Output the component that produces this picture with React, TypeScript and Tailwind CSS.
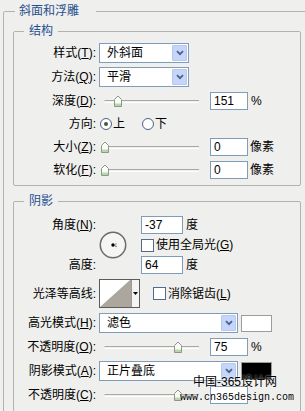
import type { ReactNode } from "react";

/* ── small pieces ── */
const Key = ({ k }: { k: string }) => <span className="underline underline-offset-[1px]">{k}</span>;

function Label({ children }: { children: ReactNode }) {
  return <div className="w-[83px] shrink-0 whitespace-nowrap pr-[1px] text-right">{children}</div>;
}

function Select({ value, wide }: { value: string; wide?: boolean }) {
  return (
    <div
      className={`ml-[2px] flex h-[20px] shrink-0 items-center border border-[#7f9db9] bg-white p-[1px] ${
        wide ? "w-[139px]" : "w-[90px]"
      }`}
    >
      <span className="flex-1 pl-[6px]">{value}</span>
      <div className="flex h-full w-[15px] items-center justify-center rounded-[1px] border border-[#b4c8f2] bg-[#c6d6fb]">
        <svg width="8" height="6" viewBox="0 0 8 6">
          <path d="M1 1.2 L4 4.2 L7 1.2" fill="none" stroke="#4d6185" strokeWidth="1.8" />
        </svg>
      </div>
    </div>
  );
}

function Slider({ at }: { at: number }) {
  return (
    <div className="relative ml-[2px] h-[18px] w-[104px] shrink-0">
      <div className="absolute left-[5px] right-[4px] top-[8px] h-[3px] rounded-l-full border-t border-b border-t-[#a9a9a4] border-b-white" />
      <svg className="absolute top-[3px]" style={{ left: at }} width="10" height="12" viewBox="0 0 10 12">
        <path d="M1.5 11.5 V4.5 L5 1 L8.5 4.5 V11.5 Z" fill="#fbfbf8" stroke="#8b978a" />
        <rect x="2" y="8.5" width="6" height="2.5" fill="#b5d9a6" />
      </svg>
    </div>
  );
}

function Num({ v, wide }: { v: string; wide?: boolean }) {
  return (
    <div
      className={`flex h-[18px] shrink-0 items-center border border-[#7f9db9] bg-white pl-[3px] ${
        wide ? "w-[42px]" : "w-[38px]"
      }`}
    >
      {v}
    </div>
  );
}

const Check = () => <div className="h-[13px] w-[13px] shrink-0 border border-[#506b8c] bg-white" />;

function Radio({ on }: { on?: boolean }) {
  return (
    <div className="flex h-[12px] w-[12px] shrink-0 items-center justify-center rounded-full border border-[#4d6280] bg-white">
      {on && <div className="h-[4px] w-[4px] rounded-full bg-[#3f5a3f]" />}
    </div>
  );
}

function Group({ title, className, children }: { title: string; className: string; children: ReactNode }) {
  return (
    <fieldset className={`w-[288px] rounded-[2px] border border-[#b3b3ad] ${className}`}>
      <legend className="ml-[10px] px-[5px] text-[#1f4f8f]">{title}</legend>
      {children}
    </fieldset>
  );
}

export default function App() {
  return (
    <div className="relative h-[411px] w-[305px] overflow-hidden bg-[#efefed] pt-[3px] font-['Liberation_Sans','Noto_Sans_CJK_SC',sans-serif] text-[12px] leading-[16px] text-black">
      <fieldset className="ml-[3px] w-[330px] rounded-[2px] border border-[#b3b3ad] pb-[20px]">
        <legend className="ml-[11px] pl-[4px] pr-[17px] text-[#1f4f8f]">斜面和浮雕</legend>

        {/* ── 结构 ── */}
        <Group title="结构" className="ml-[9px] mt-[4px] pb-[4px] pt-[2px]">
          <div className="flex h-[24px] items-center">
            <Label>样式(<Key k="T" />):</Label>
            <Select value="外斜面" />
          </div>
          <div className="flex h-[24px] items-center">
            <Label>方法(<Key k="Q" />):</Label>
            <Select value="平滑" />
          </div>
          <div className="flex h-[23px] items-center">
            <Label>深度(<Key k="D" />):</Label>
            <Slider at={14} />
            <div className="ml-[7px]"><Num v="151" /></div>
            <span className="ml-[3px]">%</span>
          </div>
          <div className="flex h-[23px] items-center">
            <Label>方向:</Label>
            <div className="ml-[3px]"><Radio on /></div>
            <span className="ml-[1px]">上</span>
            <div className="ml-[17px]"><Radio /></div>
            <span className="ml-[1px]">下</span>
          </div>
          <div className="flex h-[23px] items-center">
            <Label>大小(<Key k="Z" />):</Label>
            <Slider at={1} />
            <div className="ml-[7px]"><Num v="0" /></div>
            <span className="ml-[2px]">像素</span>
          </div>
          <div className="flex h-[23px] items-center">
            <Label>软化(<Key k="F" />):</Label>
            <Slider at={1} />
            <div className="ml-[7px]"><Num v="0" /></div>
            <span className="ml-[2px]">像素</span>
          </div>
        </Group>

        {/* ── 阴影 ── */}
        <Group title="阴影" className="ml-[9px] mt-[7px] pb-[10px] pt-[7px]">
          <div className="flex h-[58px]">
            <div className="flex w-[83px] shrink-0 flex-col justify-between">
              <div className="flex h-[18px] items-center justify-end pr-[1px]">角度(<Key k="N" />):</div>
              <div className="flex h-[18px] items-center justify-end pr-[1px]">高度:</div>
            </div>
            <svg className="ml-[2px] self-center" width="28" height="28" viewBox="0 0 28 28">
              <circle cx="14" cy="14" r="12.7" fill="#f5f5f3" stroke="#6a6a6a" strokeWidth="1.5" />
              <circle cx="14" cy="14" r="1.7" fill="#000" />
              <rect x="16.5" y="12.5" width="1" height="1" fill="#333" />
              <rect x="16.5" y="15" width="1" height="1" fill="#333" />
              <rect x="15.5" y="14" width="1" height="1" fill="#555" />
            </svg>
            <div className="ml-[14px] flex flex-col">
              <div className="flex h-[18px] items-center">
                <Num v="-37" wide />
                <span className="ml-[3px]">度</span>
              </div>
              <div className="mt-[4px] flex h-[14px] items-center">
                <Check />
                <span className="ml-[2px]">使用全局光(<Key k="G" />)</span>
              </div>
              <div className="mt-[4px] flex h-[18px] items-center">
                <Num v="64" wide />
                <span className="ml-[3px]">度</span>
              </div>
            </div>
          </div>

          <div className="mt-[5px] flex h-[29px] items-center">
            <Label>光泽等高线:</Label>
            <div className="ml-[2px] flex h-[29px] w-[41px] shrink-0 border border-[#5a5a5a] bg-white">
              <svg width="31" height="27" viewBox="0 0 31 27">
                <polygon points="0,27 30,0 31,0 31,27" fill="#aba79f" />
              </svg>
              <div className="flex flex-1 items-center justify-center border-l border-[#9a9a9a] bg-[#f4f4f2]">
                <svg width="5" height="3" viewBox="0 0 5 3">
                  <path d="M0 0 H5 L2.5 3 Z" fill="#000" />
                </svg>
              </div>
            </div>
            <div className="ml-[13px]"><Check /></div>
            <span className="ml-[2px]">消除锯齿(<Key k="L" />)</span>
          </div>

          <div className="mt-[3px] flex h-[24px] items-center">
            <Label>高光模式(<Key k="H" />):</Label>
            <Select value="滤色" wide />
            <div className="ml-[3px] h-[17px] w-[31px] border border-[#9c9c9c] bg-white" />
          </div>
          <div className="flex h-[24px] items-center">
            <Label>不透明度(<Key k="O" />):</Label>
            <Slider at={74} />
            <div className="ml-[7px]"><Num v="75" /></div>
            <span className="ml-[3px]">%</span>
          </div>
          <div className="flex h-[24px] items-center">
            <Label>阴影模式(<Key k="A" />):</Label>
            <Select value="正片叠底" wide />
            <div className="ml-[3px] h-[18px] w-[31px] border border-[#9c9c9c] bg-black" />
          </div>
          <div className="flex h-[24px] items-center">
            <Label>不透明度(<Key k="C" />):</Label>
            <Slider at={74} />
            <div className="ml-[7px]"><Num v="" /></div>
          </div>
        </Group>
      </fieldset>

      {/* watermark over the dialog */}
      <div className="absolute left-[193px] top-[375px] text-[12px] leading-[14px] [text-shadow:0_0_2px_#fff]">
        中国-365设计网
      </div>
      <div className="absolute left-[180px] top-[392px] font-['Liberation_Mono',monospace] text-[10px] leading-[12px] [text-shadow:0_0_2px_#fff]">
        www.cn365design.com
      </div>
    </div>
  );
}
